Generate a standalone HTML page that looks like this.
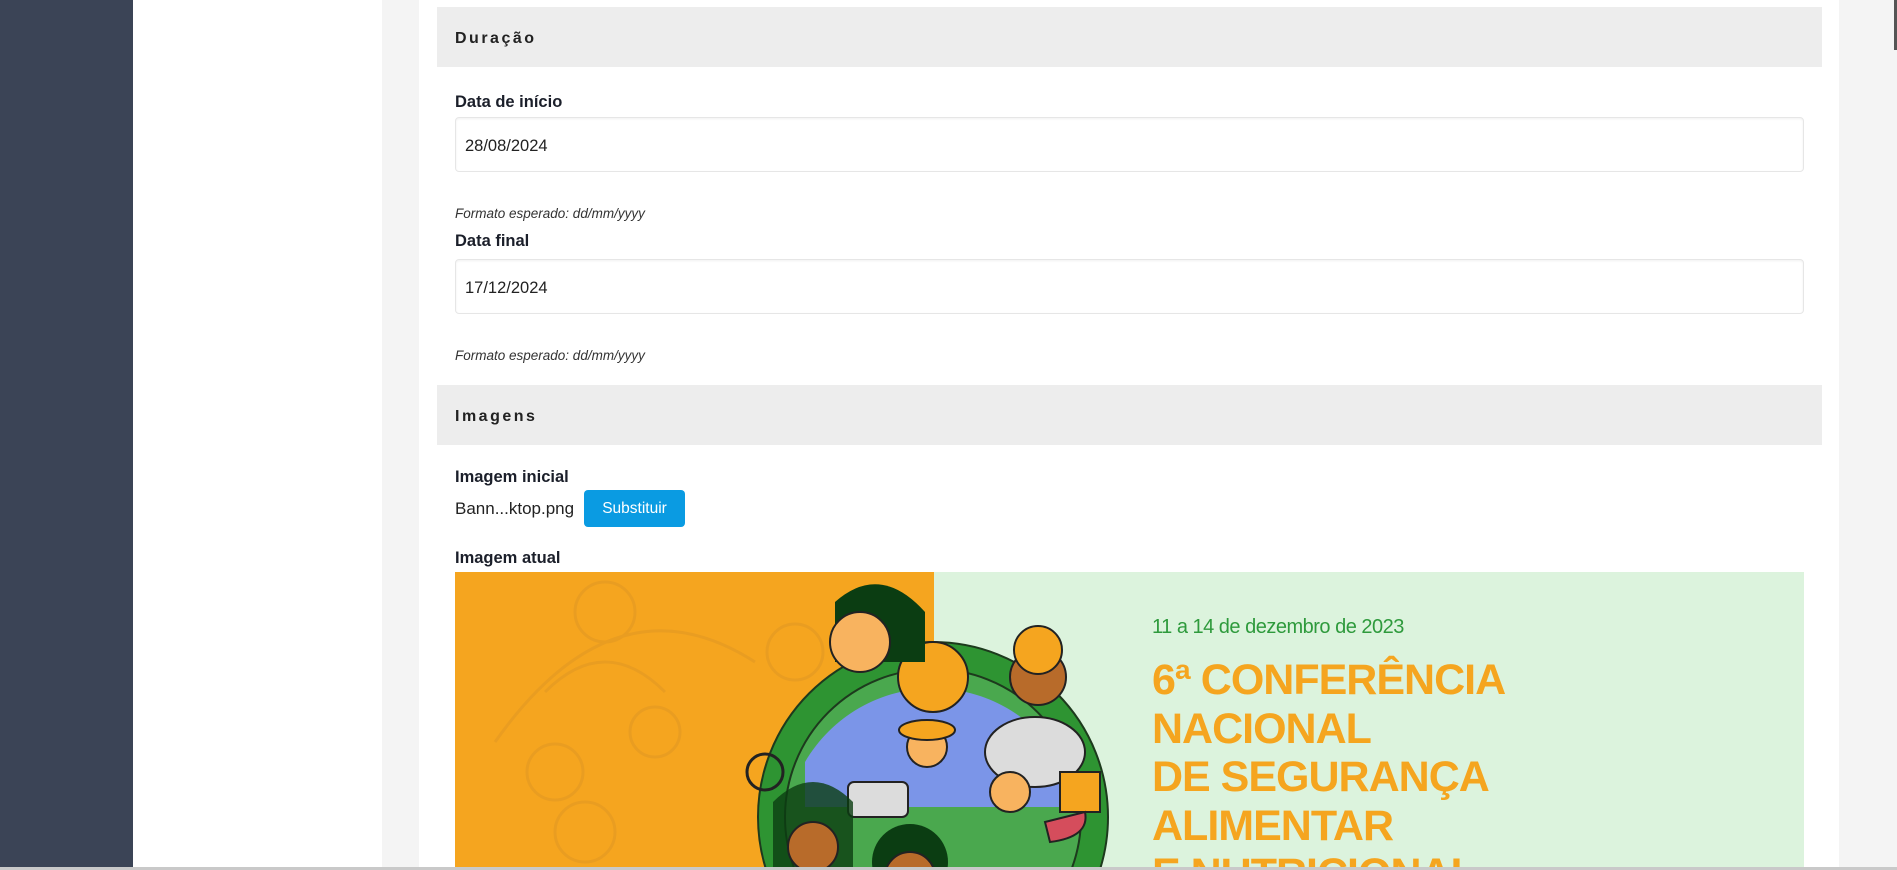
<!DOCTYPE html>
<html><head><meta charset="utf-8"><style>
*{margin:0;padding:0;box-sizing:border-box}
html,body{width:1897px;height:870px;overflow:hidden}
body{background:#f4f4f4;font-family:"Liberation Sans",sans-serif;color:#1f2430;position:relative}
.side{position:absolute;left:0;top:0;width:133px;height:870px;background:#3b4456}
.wp{position:absolute;left:133px;top:0;width:249px;height:870px;background:#fff}
.card{position:absolute;left:419px;top:0;width:1420px;height:870px;background:#fff}
.hdr{position:absolute;left:437px;width:1385px;height:60px;background:#ededed;font-weight:bold;font-size:16px;letter-spacing:2.5px;padding-left:18px;line-height:63px;color:#222}
.lbl{position:absolute;left:455px;font-weight:bold;font-size:16.5px;color:#1b1f2a}
.inp{position:absolute;left:455px;width:1349px;height:55px;border:1px solid #e6e6e6;border-radius:4px;box-shadow:inset 0 1px 2px rgba(0,0,0,.06);font-size:16.5px;padding-left:9px;line-height:56px;color:#222}
.hint{position:absolute;left:455px;font-style:italic;font-size:13.5px;color:#333}
.btn{position:absolute;left:584px;top:490px;width:101px;height:37px;background:#0a9be2;border-radius:4px;color:#fff;font-size:15.5px;text-align:center;line-height:38px}
.ban{position:absolute;left:455px;top:572px;width:1349px;height:295px;background:#dcf3dd;overflow:hidden}
.or{position:absolute;left:0;top:0;width:479px;height:295px;background:#f5a51f}
.date{position:absolute;left:697px;top:44px;font-size:20px;color:#2e9a3c;letter-spacing:-.5px}
.tt{position:absolute;left:697px;top:84px;font-size:43px;font-weight:bold;color:#f5a51f;line-height:48.5px;letter-spacing:-1px;white-space:nowrap}
.bot{position:absolute;left:0;top:867px;width:1897px;height:3px;background:#c9c9c9}
</style></head><body>
<div class="side"></div><div class="wp"></div><div class="card"></div>
<div style="position:absolute;right:0;top:0;width:3px;height:50px;background:#555"></div>
<div class="hdr" style="top:7px">Duração</div>
<div class="lbl" style="top:93px">Data de início</div>
<div class="inp" style="top:117px">28/08/2024</div>
<div class="hint" style="top:206px">Formato esperado: dd/mm/yyyy</div>
<div class="lbl" style="top:232px">Data final</div>
<div class="inp" style="top:259px">17/12/2024</div>
<div class="hint" style="top:348px">Formato esperado: dd/mm/yyyy</div>
<div class="hdr" style="top:385px">Imagens</div>
<div class="lbl" style="top:468px">Imagem inicial</div>
<div style="position:absolute;left:455px;top:499px;font-size:17px;color:#222">Bann...ktop.png</div>
<div class="btn">Substituir</div>
<div class="lbl" style="top:549px">Imagem atual</div>
<div class="ban">
<div class="or"></div>
<svg width="1349" height="295" style="position:absolute;left:0;top:0">
<g fill="none" stroke="#e59a22" stroke-width="3" opacity=".7">
<circle cx="150" cy="40" r="30"/><path d="M90 120 Q150 60 210 120"/><circle cx="340" cy="80" r="28"/><circle cx="200" cy="160" r="25"/><circle cx="100" cy="200" r="28"/><circle cx="130" cy="260" r="30"/><path d="M40 170 Q160 0 300 90"/>
</g>
<circle cx="478" cy="245" r="175" fill="#2e9432" stroke="#1d3a1d" stroke-width="2"/>
<circle cx="478" cy="245" r="148" fill="#4aa84e" stroke="#1d3a1d" stroke-width="2"/>
<path d="M350 190 A148 148 0 0 1 606 190 L606 235 L350 235Z" fill="#7b95e8"/>
<circle cx="478" cy="105" r="35" fill="#f5a51f" stroke="#222" stroke-width="2"/>
<ellipse cx="580" cy="180" rx="50" ry="35" fill="#dcdcdc" stroke="#222" stroke-width="2"/>
<path d="M380 30 q45 -40 90 10 l0 50 l-90 0z" fill="#0b3d12"/>
<circle cx="405" cy="70" r="30" fill="#f8b35f" stroke="#222" stroke-width="2"/>
<circle cx="583" cy="105" r="28" fill="#b86b2a" stroke="#222" stroke-width="2"/>
<circle cx="583" cy="78" r="24" fill="#f5a51f" stroke="#222" stroke-width="2"/>
<circle cx="472" cy="175" r="20" fill="#f8b35f" stroke="#222" stroke-width="2"/>
<ellipse cx="472" cy="158" rx="28" ry="10" fill="#f5a51f" stroke="#222" stroke-width="2"/>
<circle cx="310" cy="200" r="18" fill="none" stroke="#222" stroke-width="3"/>
<rect x="393" y="210" width="60" height="35" rx="6" fill="#dcdcdc" stroke="#222" stroke-width="2"/>
<circle cx="555" cy="220" r="20" fill="#f8b35f" stroke="#222" stroke-width="2"/>
<rect x="605" y="200" width="40" height="40" fill="#f5a51f" stroke="#222" stroke-width="2"/>
<path d="M318 230 q40 -40 80 0 l0 70 l-80 0z" fill="#0b3d12" opacity=".8"/>
<circle cx="358" cy="275" r="25" fill="#b86b2a" stroke="#222" stroke-width="2"/>
<circle cx="455" cy="290" r="38" fill="#0b3d12"/>
<circle cx="455" cy="305" r="25" fill="#b86b2a" stroke="#222" stroke-width="2"/>
<path d="M590 250 l40 -10 q5 25 -35 30z" fill="#d54d5c" stroke="#222" stroke-width="2"/>
</svg>
<div class="date">11 a 14 de dezembro de 2023</div>
<div class="tt">6ª CONFERÊNCIA<br>NACIONAL<br>DE SEGURANÇA<br>ALIMENTAR<br>E NUTRICIONAL</div>
</div>
<div class="bot"></div>
</body></html>
